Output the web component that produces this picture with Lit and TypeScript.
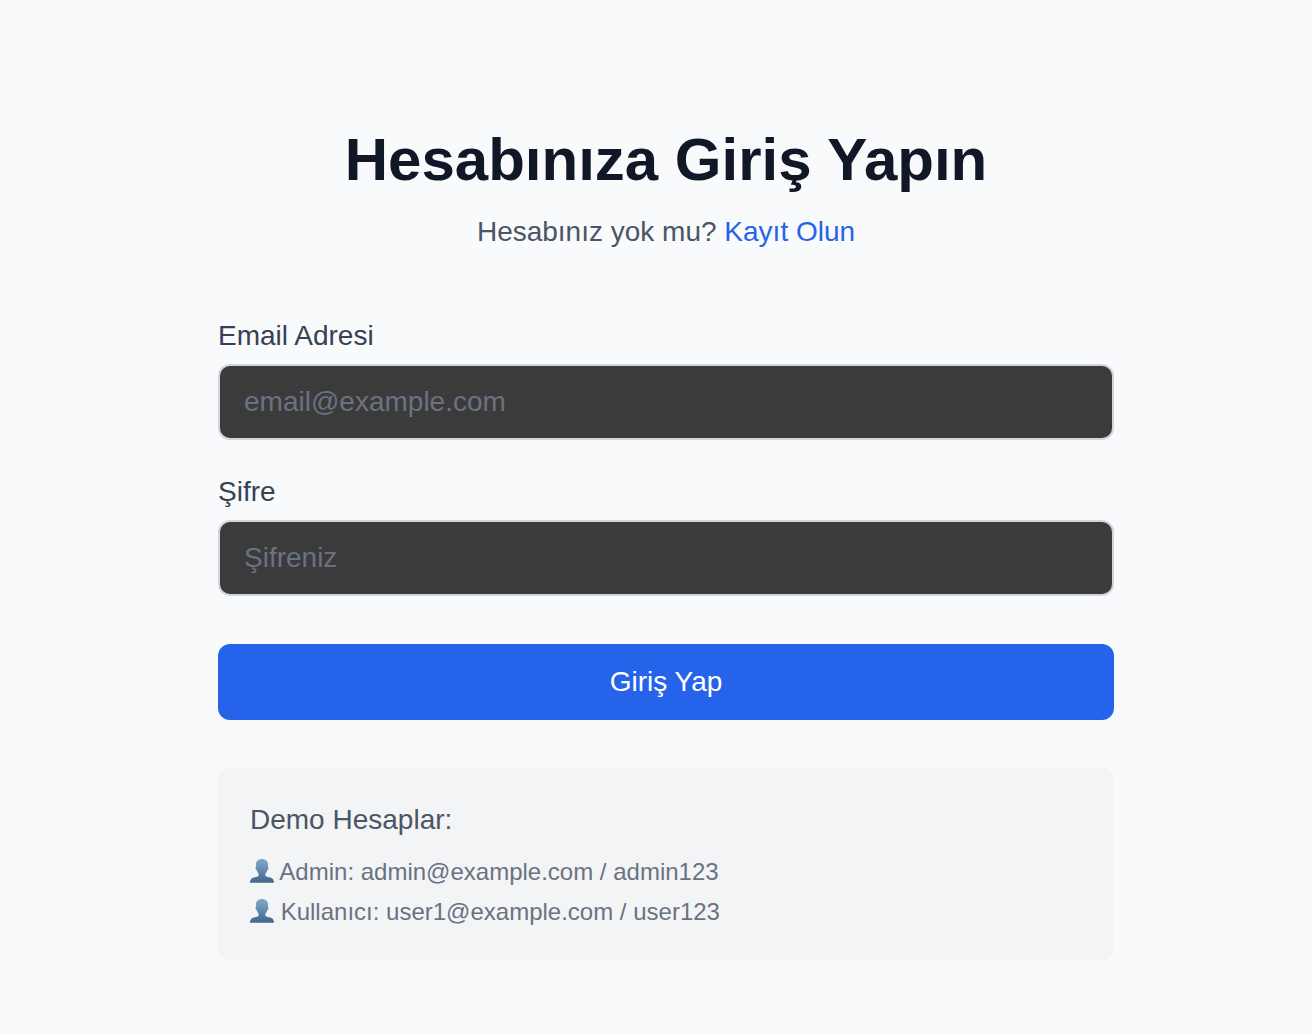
import { LitElement, html, css, svg } from "lit";
import { customElement, state } from "lit/decorators.js";

interface DemoAccount {
  role: string;
  email: string;
  password: string;
}

const accounts: DemoAccount[] = [
  { role: "Admin", email: "admin@example.com", password: "admin123" },
  { role: "Kullanıcı", email: "user1@example.com", password: "user123" },
];

@customElement("user-icon")
class UserIcon extends LitElement {
  static styles = css`
    :host {
      display: inline-block;
      width: 24px;
      height: 24px;
      vertical-align: -3px;
    }
    .icon {
      display: block;
      width: 100%;
      height: 100%;
    }
  `;

  render() {
    return html`<svg class="icon" viewBox="0 0 24 24" aria-hidden="true">
      ${svg`
        <defs>
          <linearGradient id="fill" x1="0" y1="0" x2="0" y2="1">
            <stop offset="0" stop-color="#80a8c8"></stop>
            <stop offset="0.5" stop-color="#6489ae"></stop>
            <stop offset="1" stop-color="#41658a"></stop>
          </linearGradient>
        </defs>
        <path
          fill="url(#fill)"
          d="M12 0.1C8.2 0.1 5.9 2.3 5.9 6L6 7.8C5.5 8.2 5.5 9 5.7 9.8C5.9 10.6 6.3 11 6.7 11.1C7 12.6 7.6 13.8 8.5 14.7C8.7 15.4 8.7 16.1 8.5 16.7C8.1 17.4 7.1 17.7 5.8 18C4.2 18.3 2.7 18.6 1.7 19.4C0.6 20.3 0.1 21.8 0 23.8H24C23.9 21.8 23.4 20.3 22.3 19.4C21.3 18.6 19.8 18.3 18.2 18C16.9 17.7 15.9 17.4 15.5 16.7C15.3 16.1 15.3 15.4 15.5 14.7C16.4 13.8 17 12.6 17.3 11.1C17.7 11 18.1 10.6 18.3 9.8C18.5 9 18.5 8.2 18 7.8L18.1 6C18.1 2.3 15.8 0.1 12 0.1Z"
        ></path>
      `}
    </svg>`;
  }
}

@customElement("app-root")
class AppRoot extends LitElement {
  static styles = css`
    :host {
      display: block;
      font-family: "Liberation Sans", Arial, sans-serif;
      font-size: 28px;
      line-height: 40px;
      color: #364153;
    }
    * {
      box-sizing: border-box;
    }
    .page {
      display: flex;
      justify-content: center;
      min-height: 100vh;
      padding: 124px 0 64px 20px;
      background: #f9fafc;
    }
    .panel {
      width: 100%;
      max-width: 896px;
    }
    .intro {
      text-align: center;
    }
    .title {
      margin: 0;
      font-size: 60px;
      line-height: 72px;
      font-weight: 700;
      color: #101828;
    }
    .subtitle {
      margin: 16px 0 0;
      color: #4a5565;
    }
    .link {
      color: #2563eb;
      text-decoration: none;
    }
    .form {
      display: flex;
      flex-direction: column;
      gap: 48px;
      margin-top: 64px;
    }
    .fields {
      display: flex;
      flex-direction: column;
      gap: 32px;
    }
    .field {
      display: flex;
      flex-direction: column;
      gap: 8px;
    }
    .input {
      width: 100%;
      height: 76px;
      margin: 0;
      padding: 16px 24px;
      border: 2px solid #d1d5dc;
      border-radius: 12px;
      background: #3b3b3b;
      color: #ffffff;
      font: inherit;
    }
    .input::placeholder {
      color: #6a7282;
      opacity: 1;
    }
    .submit {
      width: 100%;
      margin: 0;
      padding: 18px 32px;
      border: 0;
      border-radius: 12px;
      background: #2563eb;
      color: #ffffff;
      font: inherit;
      cursor: pointer;
    }
    .demo {
      padding: 32px;
      border-radius: 12px;
      background: #f3f4f6;
    }
    .demo-title {
      margin: 0;
      font-size: 28px;
      font-weight: 400;
      color: #4a5565;
    }
    .accounts {
      display: flex;
      flex-direction: column;
      gap: 8px;
      margin: 16px 0 0;
      padding: 0;
      list-style: none;
      font-size: 24px;
      line-height: 32px;
      color: #6a7282;
    }
  `;

  @state() private email = "";
  @state() private password = "";

  private submit(event: Event) {
    event.preventDefault();
  }

  render() {
    return html`
      <main class="page">
        <div class="panel">
          <header class="intro">
            <h1 class="title">Hesabınıza Giriş Yapın</h1>
            <p class="subtitle">
              Hesabınız yok mu? <a class="link" href="#register">Kayıt Olun</a>
            </p>
          </header>
          <form class="form" @submit=${this.submit}>
            <div class="fields">
              <div class="field">
                <label for="email">Email Adresi</label>
                <input
                  class="input"
                  id="email"
                  type="email"
                  placeholder="email@example.com"
                  .value=${this.email}
                  @input=${(e: Event) => (this.email = (e.target as HTMLInputElement).value)}
                />
              </div>
              <div class="field">
                <label for="password">Şifre</label>
                <input
                  class="input"
                  id="password"
                  type="password"
                  placeholder="Şifreniz"
                  .value=${this.password}
                  @input=${(e: Event) => (this.password = (e.target as HTMLInputElement).value)}
                />
              </div>
            </div>
            <button class="submit" type="submit">Giriş Yap</button>
            <section class="demo">
              <h2 class="demo-title">Demo Hesaplar:</h2>
              <ul class="accounts">
                ${accounts.map(
                  (a) => html`<li><user-icon></user-icon> ${a.role}: ${a.email} / ${a.password}</li>`
                )}
              </ul>
            </section>
          </form>
        </div>
      </main>
    `;
  }
}
